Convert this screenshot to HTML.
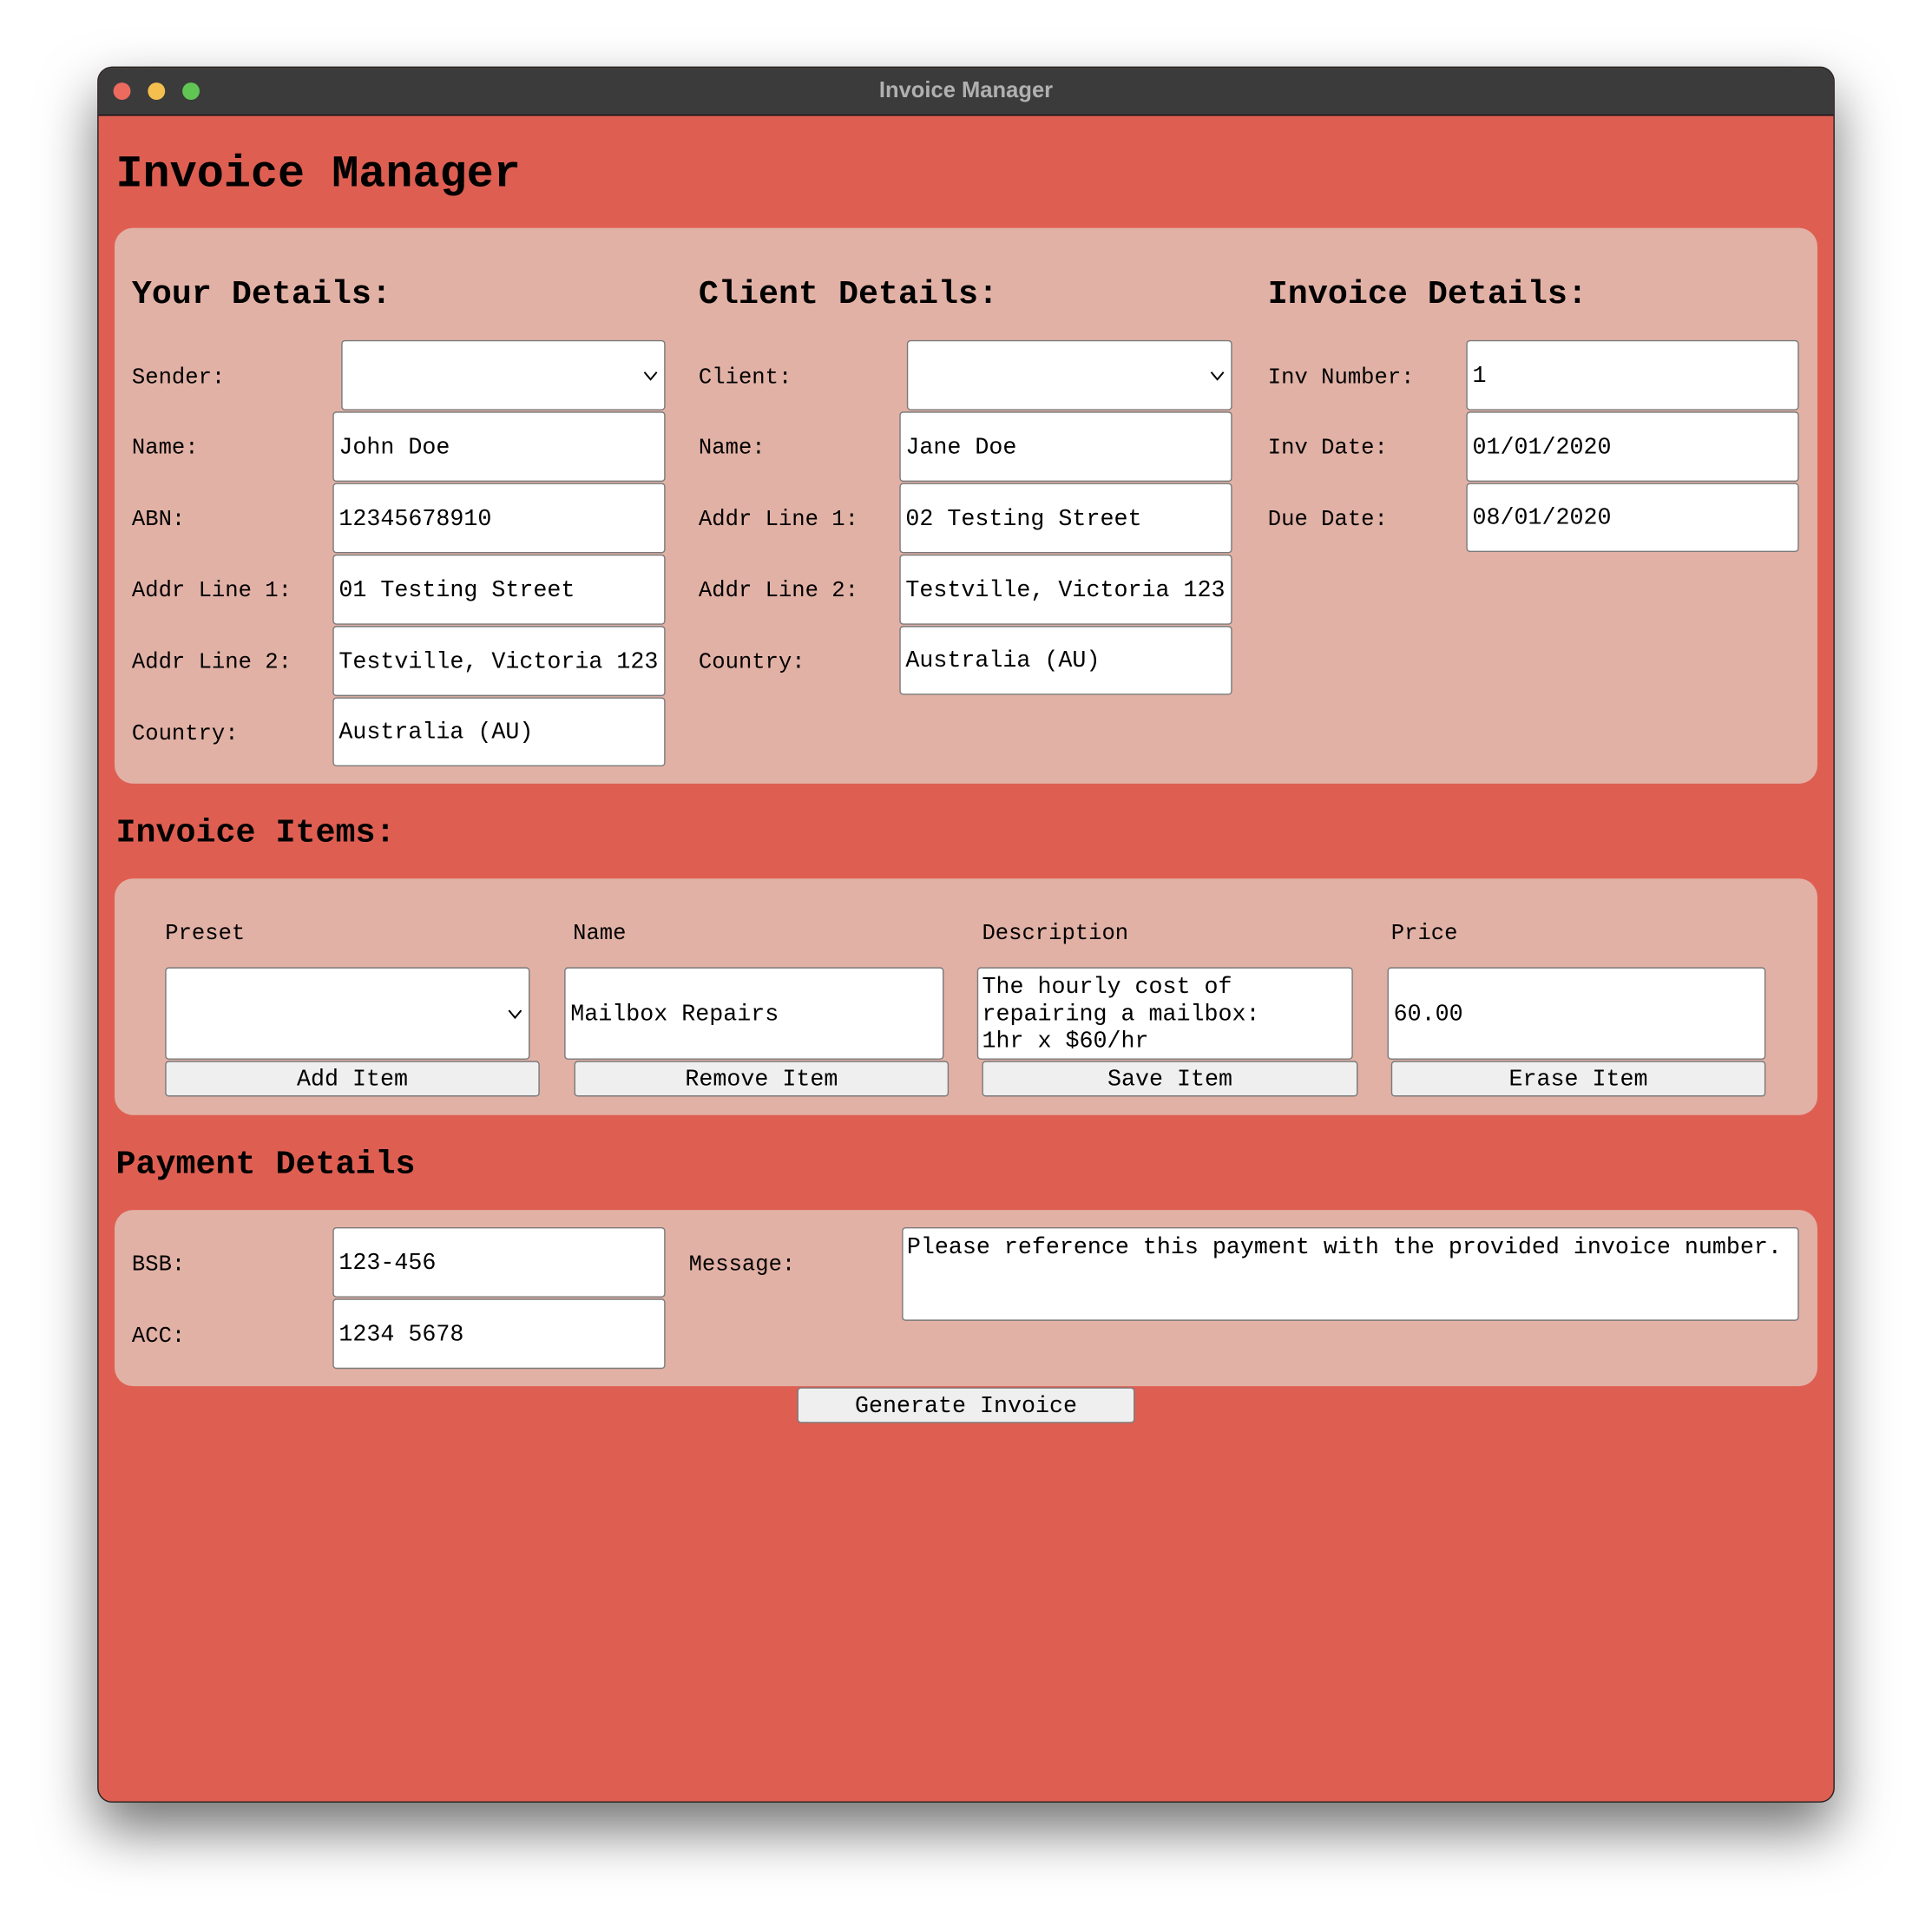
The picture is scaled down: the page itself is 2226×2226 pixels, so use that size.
<!DOCTYPE html>
<html><head><meta charset="utf-8"><style>
html,body{margin:0;padding:0;background:#fff;width:2226px;height:2226px;overflow:hidden}
#s{position:absolute;left:0;top:0;width:1568px;height:1568px;transform:scale(1.41964);transform-origin:0 0;font-family:"Liberation Mono",monospace;color:#000}
#s div{position:absolute;box-sizing:border-box}
.win{left:79px;top:54px;width:1410px;height:1409px;border-radius:12px;background:#de5f52;box-shadow:0 22px 45px rgba(0,0,0,.55);border:1px solid #222;overflow:hidden}
.tb{left:0;top:0;width:100%;height:39px;background:#3b3b3b;border-bottom:1px solid #111}
.dot{width:14px;height:14px;border-radius:50%;top:12px}
.ttl{left:0;width:100%;top:8px;text-align:center;font-family:"Liberation Sans",sans-serif;font-weight:bold;font-size:18px;color:#b0b0b0}
.pan{background:#e2b1a5;border-radius:15px}
.h1{font-weight:bold;font-size:36.5px;line-height:40px;white-space:pre}
.h2{font-weight:bold;font-size:27px;line-height:30px;white-space:pre}
.lb{font-size:18px;line-height:22px;white-space:pre}
.in{background:#fff;border:1.5px solid #7a7a7a;border-radius:3px;display:flex;align-items:center;padding-left:4px;font-size:18.8px;white-space:pre}
.sel{background:#fff;border:1.5px solid #7a7a7a;border-radius:3px}
.sel svg{position:absolute;right:5px;top:50%;margin-top:-5px}
.ta{background:#fff;border:1.5px solid #7a7a7a;border-radius:3px;padding:4px 3px;font-size:18.8px;line-height:22px;white-space:pre}
.bt{background:#efefef;border:1.5px solid #7a7a7a;border-radius:3px;text-align:center;font-size:18.8px;line-height:28px;white-space:pre}
</style></head><body><div id="s">
<div class="win">
 <div class="tb">
  <div class="dot" style="left:12px;background:#ec6a5e"></div>
  <div class="dot" style="left:40px;background:#f4bf4f"></div>
  <div class="dot" style="left:68px;background:#61c554"></div>
  <div class="ttl">Invoice Manager</div>
 </div>
</div>
<div class="h1" style="left:94px;top:122px">Invoice Manager</div>

<div class="pan" style="left:93px;top:185px;width:1382px;height:451px"></div>
<div class="h2" style="left:107px;top:225px">Your Details:</div>
<div class="h2" style="left:567px;top:225px">Client Details:</div>
<div class="h2" style="left:1029px;top:225px">Invoice Details:</div>

<div class="lb" style="left:107px;top:296px">Sender:</div>
<div class="lb" style="left:107px;top:353px">Name:</div>
<div class="lb" style="left:107px;top:411px">ABN:</div>
<div class="lb" style="left:107px;top:469px">Addr Line 1:</div>
<div class="lb" style="left:107px;top:527px">Addr Line 2:</div>
<div class="lb" style="left:107px;top:585px">Country:</div>
<div class="sel" style="left:277px;top:276px;width:263px;height:57px"><svg width="12" height="10" viewBox="0 0 12 10"><path d="M1 2 L6 8 L11 2" fill="none" stroke="#000" stroke-width="1.4"/></svg></div>
<div class="in" style="left:270px;top:334px;width:270px;height:57px">John Doe</div>
<div class="in" style="left:270px;top:392px;width:270px;height:57px">12345678910</div>
<div class="in" style="left:270px;top:450px;width:270px;height:57px">01 Testing Street</div>
<div class="in" style="left:270px;top:508px;width:270px;height:57px">Testville, Victoria 123</div>
<div class="in" style="left:270px;top:566px;width:270px;height:56px">Australia (AU)</div>

<div class="lb" style="left:567px;top:296px">Client:</div>
<div class="lb" style="left:567px;top:353px">Name:</div>
<div class="lb" style="left:567px;top:411px">Addr Line 1:</div>
<div class="lb" style="left:567px;top:469px">Addr Line 2:</div>
<div class="lb" style="left:567px;top:527px">Country:</div>
<div class="sel" style="left:736px;top:276px;width:264px;height:57px"><svg width="12" height="10" viewBox="0 0 12 10"><path d="M1 2 L6 8 L11 2" fill="none" stroke="#000" stroke-width="1.4"/></svg></div>
<div class="in" style="left:730px;top:334px;width:270px;height:57px">Jane Doe</div>
<div class="in" style="left:730px;top:392px;width:270px;height:57px">02 Testing Street</div>
<div class="in" style="left:730px;top:450px;width:270px;height:57px">Testville, Victoria 123</div>
<div class="in" style="left:730px;top:508px;width:270px;height:56px">Australia (AU)</div>

<div class="lb" style="left:1029px;top:296px">Inv Number:</div>
<div class="lb" style="left:1029px;top:353px">Inv Date:</div>
<div class="lb" style="left:1029px;top:411px">Due Date:</div>
<div class="in" style="left:1190px;top:276px;width:270px;height:57px">1</div>
<div class="in" style="left:1190px;top:334px;width:270px;height:57px">01/01/2020</div>
<div class="in" style="left:1190px;top:392px;width:270px;height:56px">08/01/2020</div>

<div class="h2" style="left:94px;top:662px">Invoice Items:</div>
<div class="pan" style="left:93px;top:713px;width:1382px;height:192px"></div>
<div class="lb" style="left:134px;top:747px">Preset</div>
<div class="lb" style="left:465px;top:747px">Name</div>
<div class="lb" style="left:797px;top:747px">Description</div>
<div class="lb" style="left:1129px;top:747px">Price</div>
<div class="sel" style="left:134px;top:785px;width:296px;height:75px"><svg width="12" height="10" viewBox="0 0 12 10"><path d="M1 2 L6 8 L11 2" fill="none" stroke="#000" stroke-width="1.4"/></svg></div>
<div class="in" style="left:458px;top:785px;width:308px;height:75px">Mailbox Repairs</div>
<div class="ta" style="left:793px;top:785px;width:305px;height:75px">The hourly cost of
repairing a mailbox:
1hr x $60/hr</div>
<div class="in" style="left:1126px;top:785px;width:307px;height:75px">60.00</div>
<div class="bt" style="left:134px;top:861px;width:304px;height:29px">Add Item</div>
<div class="bt" style="left:466px;top:861px;width:304px;height:29px">Remove Item</div>
<div class="bt" style="left:797px;top:861px;width:305px;height:29px">Save Item</div>
<div class="bt" style="left:1129px;top:861px;width:304px;height:29px">Erase Item</div>

<div class="h2" style="left:94px;top:931px">Payment Details</div>
<div class="pan" style="left:93px;top:982px;width:1382px;height:143px"></div>
<div class="lb" style="left:107px;top:1016px">BSB:</div>
<div class="lb" style="left:107px;top:1074px">ACC:</div>
<div class="lb" style="left:559px;top:1016px">Message:</div>
<div class="in" style="left:270px;top:996px;width:270px;height:57px">123-456</div>
<div class="in" style="left:270px;top:1054px;width:270px;height:57px">1234 5678</div>
<div class="ta" style="left:732px;top:996px;width:728px;height:76px">Please reference this payment with the provided invoice number.</div>
<div class="bt" style="left:647px;top:1126px;width:274px;height:29px">Generate Invoice</div>
</div></body></html>
